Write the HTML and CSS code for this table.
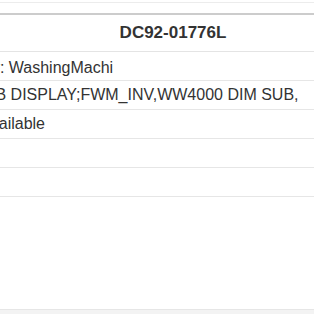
FILE: index.html
```html
<!DOCTYPE html>
<html lang="en">
<head>
    <link rel="stylesheet" href="styles.css">
</head>
<body>
<div id="maindiv">
    <div id="toolbardiv"></div>
    <div id="detaildiv">
        <table id="partTable">
            <thead>
            <tr>
                <th>DC92-01776L</th>
            </tr>
            </thead>
            <tbody>
            <tr><td>Category: WashingMachi</td></tr>
            <tr><td>Part: PCB DISPLAY;FWM_INV,WW4000 DIM SUB,</td></tr>
            <tr><td>State: Available</td></tr>
            <tr><td></td></tr>
            <tr><td></td></tr>
            </tbody>
        </table>
    </div>
    <div id="footerdiv"></div>
</div>
</body>
</html>
```

FILE: styles.css
```css
html, body {
    margin: 0;
    overflow: hidden;
    background-color: #ffffff;
}

#maindiv {
    font-family: "Liberation Sans", Arial, sans-serif;
    color: #333333;
}

#toolbardiv {
    height: 2px;
    border-bottom: 1px solid #ececec;
    margin-bottom: 10px;
}

#detaildiv {
    height: 296px;
}

#partTable {
    border-collapse: collapse;
    width: 492px;
    margin-left: -73px;
    border-top: 2px solid #cccccc;
}

#partTable th {
    height: 36px;
    padding: 0 8px;
    font-size: 17px;
    font-weight: bold;
    text-align: center;
    vertical-align: middle;
    border-bottom: 1px solid #e4e4e4;
}

#partTable td {
    height: 28px;
    padding: 0 8px;
    font-size: 16px;
    text-align: left;
    vertical-align: middle;
    white-space: nowrap;
    border-bottom: 1px solid #e6e6e6;
}

#partTable tbody tr:first-child td {
    height: 24px;
    padding-top: 4px;
}

#footerdiv {
    height: 4px;
    border-top: 1px solid #e6e6e6;
    background-color: #f3f3f3;
}
```
